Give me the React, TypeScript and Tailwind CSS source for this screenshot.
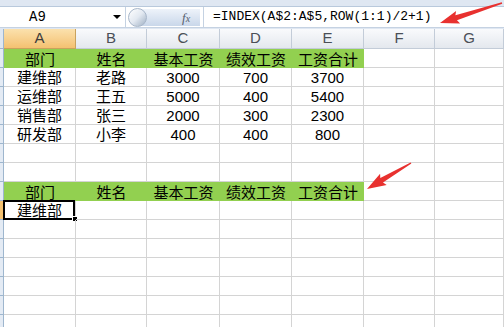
import React from "react"

const cols = ["A", "B", "C", "D", "E", "F", "G"]

const rows: string[][] = [
  ["部门", "姓名", "基本工资", "绩效工资", "工资合计", "", ""],
  ["建维部", "老路", "3000", "700", "3700", "", ""],
  ["运维部", "王五", "5000", "400", "5400", "", ""],
  ["销售部", "张三", "2000", "300", "2300", "", ""],
  ["研发部", "小李", "400", "400", "800", "", ""],
  ["", "", "", "", "", "", ""],
  ["", "", "", "", "", "", ""],
  ["部门", "姓名", "基本工资", "绩效工资", "工资合计", "", ""],
  ["建维部", "", "", "", "", "", ""],
  ...Array.from({ length: 6 }, () => ["", "", "", "", "", "", ""]),
]

const greenRows = [0, 7]

// tapered annotation arrow from tail (sx,sy) to tip (tx,ty)
function arrowPoints(sx: number, sy: number, tx: number, ty: number) {
  const dx = tx - sx
  const dy = ty - sy
  const len = Math.hypot(dx, dy)
  const ux = dx / len
  const uy = dy / len
  const nx = -uy
  const ny = ux
  const bx = tx - ux * 17
  const by = ty - uy * 17
  const p = (x: number, y: number) => `${x.toFixed(1)},${y.toFixed(1)}`
  return [
    p(sx + nx * 0.7, sy + ny * 0.7),
    p(bx + nx * 2.6, by + ny * 2.6),
    p(bx + nx * 6.5 - ux * 2, by + ny * 6.5 - uy * 2),
    p(tx, ty),
    p(bx - nx * 6.5 - ux * 2, by - ny * 6.5 - uy * 2),
    p(bx - nx * 2.6, by - ny * 2.6),
    p(sx - nx * 0.7, sy - ny * 0.7),
  ].join(" ")
}

export default function App() {
  return (
    <div
      className="relative w-[504px] h-[327px] overflow-hidden bg-white"
      style={{ fontFamily: '"Liberation Sans", "Noto Sans CJK SC", sans-serif' }}
    >
      {/* ribbon edge */}
      <div className="h-[7px] bg-[#dfe7f2] border-b border-[#b9c9dc]" />

      {/* formula bar */}
      <div className="flex h-[21px] items-center bg-white border-b border-[#c5d2e2]">
        <div className="relative flex h-full w-[126px] items-center justify-center border-r border-[#c5d2e2]">
          <span className="font-['Liberation_Mono',monospace] text-[14px] text-black -ml-[50px]">A9</span>
          <span className="absolute right-[4px] top-[8px] h-0 w-0 border-x-[4px] border-t-[4px] border-x-transparent border-t-black" />
        </div>
        <div className="relative flex h-full w-[77px] items-center">
          <div className="absolute left-[4px] top-[2px] h-[17px] w-[70px] rounded-l-full bg-gradient-to-b from-[#eef3fa] to-[#c9d7ea]" />
          <div className="absolute left-[2px] top-[1px] h-[19px] w-[19px] rounded-full border border-[#a7b6c9] bg-gradient-to-br from-white via-[#e3e9f1] to-[#9fb0c4]" />
          <span className="absolute left-[56px] top-[1px] font-['Liberation_Serif',serif] text-[13px] italic text-[#55606e]">
            f<span className="text-[10px]">x</span>
          </span>
        </div>
        <div className="h-full w-px bg-[#c5d2e2]" />
        <span className="ml-[9px] font-['Liberation_Mono',monospace] text-[13px] text-black">
          =INDEX(A$2:A$5,ROW(1:1)/2+1)
        </span>
      </div>
      <div className="h-[1px] bg-[#dfe7f2]" />

      {/* sheet */}
      <div className="grid grid-cols-[4px_72px_71px_73px_72px_72px_71px_1fr]">
        {/* column headers */}
        <div className="h-[20px] bg-[#dfe7f2] border-r border-b border-[#9eb6ce]" />
        {cols.map((c) => (
          <div
            key={c}
            className={`flex h-[20px] items-center justify-center border-r border-b text-[15px] ${
              c === "A"
                ? "bg-gradient-to-b from-[#fbe1ad] to-[#f4c170] border-[#c9a25d] text-[#3d3d3d]"
                : "bg-gradient-to-b from-[#f9fafc] to-[#e4e8ee] border-[#c3ccd8] text-[#4a4f57]"
            }`}
          >
            {c}
          </div>
        ))}

        {rows.map((row, r) => {
          const green = greenRows.includes(r)
          return (
            <React.Fragment key={r}>
              <div
                className={`h-[19px] border-r border-b border-[#9eb6ce] ${
                  r === 8 ? "bg-[#f4c170]" : "bg-[#e4ebf4]"
                }`}
              />
              {row.map((v, c) => {
                const fill = green && c < 5
                return (
                  <div
                    key={c}
                    className={`relative flex h-[19px] items-center justify-center pt-[1px] text-[15px] leading-none text-black ${
                      fill ? "bg-[#92d050]" : "border-r border-b border-[#d4d4d4]"
                    }`}
                  >
                    {v}
                    {r === 8 && c === 0 && (
                      <>
                        <div className="pointer-events-none absolute -left-px -top-px h-[20px] w-[72px] border-2 border-black" />
                        <div className="absolute -bottom-[3px] -right-[3px] h-[6px] w-[6px] border border-white bg-black" />
                      </>
                    )}
                  </div>
                )
              })}
            </React.Fragment>
          )
        })}
      </div>

      {/* annotation arrows */}
      <svg className="pointer-events-none absolute left-0 top-0" width="504" height="327">
        <polygon points={arrowPoints(502, 3, 440, 23)} fill="#e8312f" />
        <polygon points={arrowPoints(411, 163, 367, 189)} fill="#e8312f" />
      </svg>
    </div>
  )
}
